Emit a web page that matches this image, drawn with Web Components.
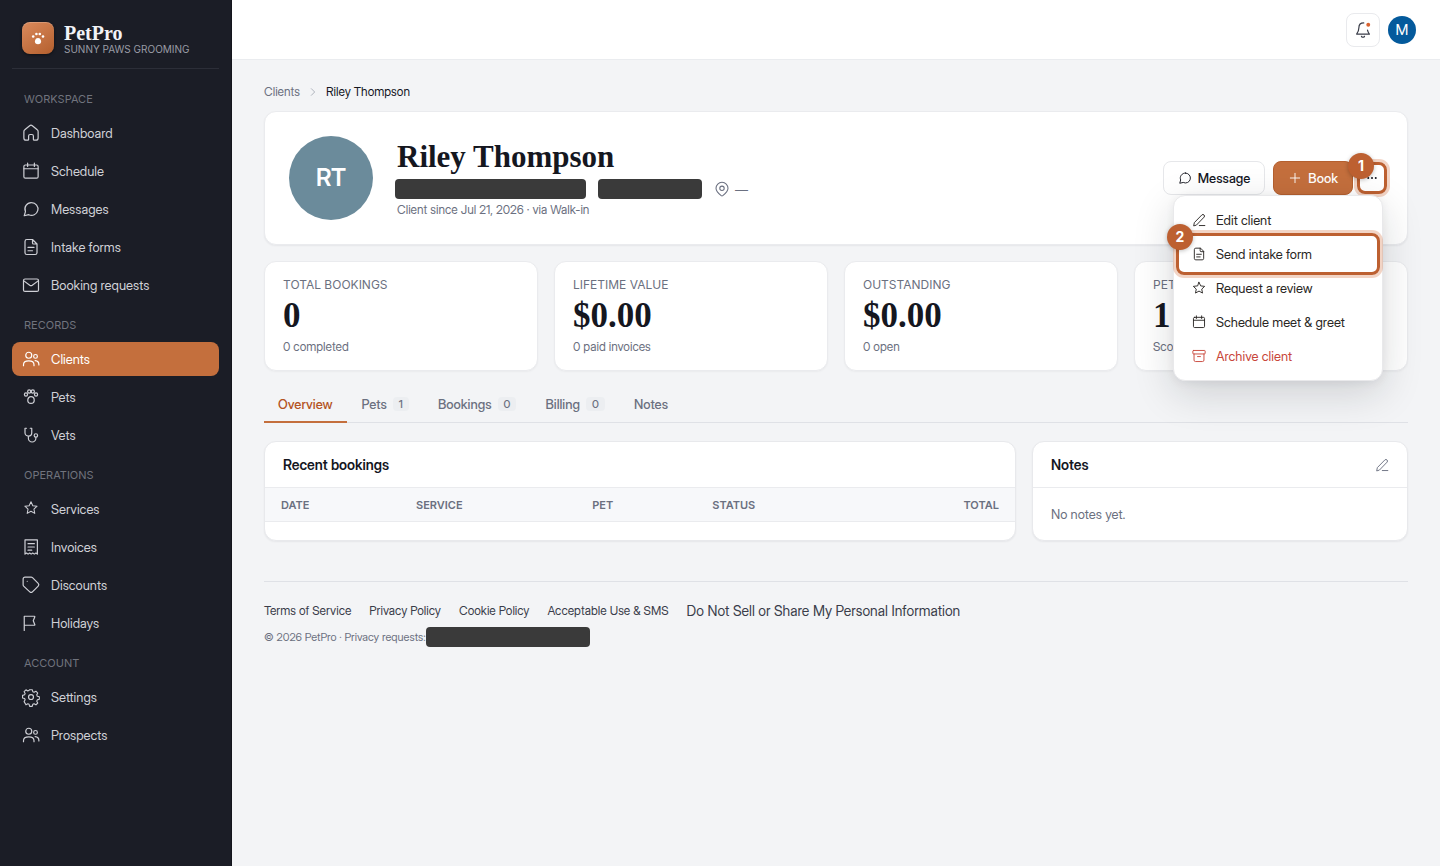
<!DOCTYPE html>
<html lang="en">
  <head>
    <meta charset="UTF-8" />
    <meta name="viewport" content="width=device-width, initial-scale=1.0" />
    <title>PetPro - Riley Thompson</title>
    <style>
      :root {
        --accent: #c46f3d;
        --accent-dark: #b45324;
        --ring: #bd6031;
        --ink: #15171f;
        --muted: #6b7080;
        --page: #f3f4f6;
        /* display cut for running text, text cut for small capitals */
        --sans: "Inter Display", Inter, "Liberation Sans", sans-serif;
        --caps: Inter, "Liberation Sans", sans-serif;
        --serif: "Liberation Serif", serif;
      }

      body {
        margin: 0;
        background: var(--page);
        color: var(--ink);
        font: 13px/20px var(--sans);
      }
    </style>
  </head>
  <body>
    <app-shell>
      <side-bar slot="side">
        <nav-group label="Workspace">
          <nav-item icon="home">Dashboard</nav-item>
          <nav-item icon="calendar">Schedule</nav-item>
          <nav-item icon="chat">Messages</nav-item>
          <nav-item icon="file">Intake forms</nav-item>
          <nav-item icon="mail">Booking requests</nav-item>
        </nav-group>
        <nav-group label="Records">
          <nav-item icon="users" active>Clients</nav-item>
          <nav-item icon="paw">Pets</nav-item>
          <nav-item icon="vet">Vets</nav-item>
        </nav-group>
        <nav-group label="Operations">
          <nav-item icon="spark">Services</nav-item>
          <nav-item icon="receipt">Invoices</nav-item>
          <nav-item icon="tag">Discounts</nav-item>
          <nav-item icon="flag">Holidays</nav-item>
        </nav-group>
        <nav-group label="Account">
          <nav-item icon="gear">Settings</nav-item>
          <nav-item icon="users">Prospects</nav-item>
        </nav-group>
      </side-bar>

      <top-bar slot="top"></top-bar>

      <bread-crumb current="Riley Thompson">Clients</bread-crumb>

      <client-header initials="RT" name="Riley Thompson">
        <span slot="since">Client since Jul 21, 2026 · via Walk-in</span>
        <client-actions slot="actions"></client-actions>
      </client-header>

      <stat-grid>
        <stat-card label="Total bookings" value="0">0 completed</stat-card>
        <stat-card label="Lifetime value" value="$0.00">0 paid invoices</stat-card>
        <stat-card label="Outstanding" value="$0.00">0 open</stat-card>
        <stat-card label="Pets" value="1">Scout</stat-card>
      </stat-grid>

      <tab-bar>
        <tab-item active>Overview</tab-item>
        <tab-item count="1">Pets</tab-item>
        <tab-item count="0">Bookings</tab-item>
        <tab-item count="0">Billing</tab-item>
        <tab-item>Notes</tab-item>
      </tab-bar>

      <panel-row>
        <panel-card heading="Recent bookings">
          <bookings-table></bookings-table>
        </panel-card>
        <panel-card heading="Notes">
          <icon-button slot="tool" icon="pencil" label="Edit notes"></icon-button>
          <empty-note>No notes yet.</empty-note>
        </panel-card>
      </panel-row>

      <page-footer></page-footer>
    </app-shell>

    <template id="app-shell">
      <style>
        :host {
          display: grid;
          grid-template-columns: 232px 1fr;
          min-height: 100vh;
        }
        main {
          padding: 22px 32px;
        }
      </style>
      <slot name="side"></slot>
      <div>
        <slot name="top"></slot>
        <main><slot></slot></main>
      </div>
    </template>

    <template id="side-bar">
      <style>
        :host {
          display: block;
          box-sizing: border-box;
          padding: 12px;
          background: #1b1d26;
          border-right: 1px solid #14151c;
        }
        header {
          display: flex;
          align-items: center;
          gap: 10px;
          padding: 10px 10px 14px;
          margin-bottom: 7px;
          border-bottom: 1px solid #2c2e38;
        }
        .logo {
          display: grid;
          place-items: center;
          width: 32px;
          height: 32px;
          border-radius: 8px;
          background: linear-gradient(145deg, #da8a5c, #b45f2e);
          box-shadow: 0 1px 3px rgba(0, 0, 0, 0.5), inset 0 1px 0 rgba(255, 255, 255, 0.2);
        }
        strong {
          display: block;
          font: bold 20px/22px var(--serif);
          color: #f2f3f7;
        }
        small {
          display: block;
          font: 10px/10px var(--caps);
          text-transform: uppercase;
          color: #9a9ca5;
          white-space: nowrap;
        }
      </style>
      <header>
        <span class="logo">
          <svg width="14" height="14" viewBox="0 0 14 14" fill="#fff">
            <circle cx="2.2" cy="5.5" r="1.3" />
            <circle cx="5.4" cy="3" r="1.3" />
            <circle cx="8.8" cy="3" r="1.3" />
            <circle cx="12" cy="5.5" r="1.3" />
            <path d="M7 7c1.900 0 3.100 1.700 3.100 3.500S9 13.200 7 13.200s-3.100-.9-3.100-2.700S5.100 7 7 7z" />
          </svg>
        </span>
        <div>
          <strong>PetPro</strong>
          <small>Sunny Paws Grooming</small>
        </div>
      </header>
      <nav aria-label="Main"><slot></slot></nav>
    </template>

    <template id="nav-group">
      <style>
        :host {
          display: block;
        }
        h2 {
          margin: 0;
          padding: 15px 12px 9px;
          font: 11px/16px var(--caps);
          text-transform: uppercase;
          color: #70737d;
        }
        div {
          display: grid;
          gap: 4px;
        }
      </style>
      <h2></h2>
      <div><slot></slot></div>
    </template>

    <template id="nav-item">
      <style>
        :host {
          display: block;
        }
        a {
          display: flex;
          align-items: center;
          gap: 11px;
          height: 34px;
          padding: 0 10px;
          border-radius: 8px;
          color: #cfd0d6;
          text-decoration: none;
        }
        :host([active]) a {
          background: var(--accent);
          color: #fff;
        }
      </style>
      <a href="#"><ui-icon size="18"></ui-icon><slot></slot></a>
    </template>

    <template id="top-bar">
      <style>
        :host {
          display: flex;
          justify-content: flex-end;
          align-items: center;
          gap: 8px;
          box-sizing: border-box;
          height: 60px;
          padding: 0 24px;
          background: #fff;
          border-bottom: 1px solid #eaecef;
        }
        button {
          display: grid;
          place-items: center;
          width: 34px;
          height: 34px;
          padding: 0;
          border: 1px solid #e9eaed;
          border-radius: 8px;
          background: #fff;
          color: #3a3d49;
        }
        .user {
          width: 28px;
          height: 28px;
          border: 0;
          border-radius: 50%;
          background: #045a9c;
          color: #fff;
          font: 15px/28px var(--sans);
        }
      </style>
      <button aria-label="Notifications"><ui-icon name="bell" size="18"></ui-icon></button>
      <button class="user">M</button>
    </template>

    <template id="bread-crumb">
      <style>
        :host {
          display: flex;
          align-items: center;
          gap: 8px;
          margin-bottom: 9px;
          font-size: 12px;
        }
        a {
          color: var(--muted);
          text-decoration: none;
        }
        ui-icon {
          color: #8d92a0;
        }
      </style>
      <a href="#"><slot></slot></a>
      <ui-icon name="chevron" size="10"></ui-icon>
      <span></span>
    </template>

    <template id="client-header">
      <style>
        :host {
          display: flex;
          align-items: center;
          gap: 24px;
          padding: 24px;
          margin-bottom: 16px;
          border: 1px solid #eaebee;
          border-radius: 12px;
          background: #fff;
          box-shadow: 0 1px 2px rgba(20, 22, 30, 0.06);
        }
        .avatar {
          display: grid;
          place-items: center;
          width: 84px;
          height: 84px;
          border-radius: 50%;
          background: #6b8b9b;
          color: #fff;
          font-size: 24px;
          font-weight: 600;
        }
        .info {
          flex: 1;
        }
        h1 {
          margin: 0;
          font: bold 31px/42px var(--serif);
        }
        .contact {
          display: flex;
          align-items: center;
          gap: 12px;
          margin: 1px 0 1px -2px;
          color: var(--muted);
        }
        .mask {
          height: 20px;
          border-radius: 4px;
          background: #3a3a3a;
        }
        .mail {
          width: 191px;
        }
        .phone {
          width: 104px;
        }
        .place {
          display: flex;
          align-items: center;
          gap: 5px;
        }
        .since {
          font-size: 12px;
          color: var(--muted);
        }
      </style>
      <div class="avatar"></div>
      <div class="info">
        <h1></h1>
        <div class="contact">
          <span class="mask mail"></span>
          <span class="mask phone"></span>
          <span class="place"><ui-icon name="pin" size="16"></ui-icon>—</span>
        </div>
        <div class="since"><slot name="since"></slot></div>
      </div>
      <slot name="actions"></slot>
    </template>

    <template id="client-actions">
      <style>
        :host {
          position: relative;
          display: flex;
          align-items: center;
          gap: 8px;
        }
        button {
          display: flex;
          align-items: center;
          gap: 6px;
          height: 34px;
          padding: 0 14px;
          border: 1px solid #e6e7ea;
          border-radius: 8px;
          background: #fff;
          color: var(--ink);
          font: 500 13px/20px var(--sans);
        }
        .primary {
          background: var(--accent);
          border-color: #b5602f;
          color: #fff;
        }
        .more {
          position: relative;
          justify-content: center;
          width: 22px;
          height: 24px;
          padding: 0;
          border: 0;
        }
        .menu {
          position: absolute;
          z-index: 1;
          top: 100%;
          right: 0;
          box-sizing: border-box;
          width: 210px;
          padding: 7px 6px;
          border: 1px solid #e9e9eb;
          border-radius: 12px;
          background: #fff;
          box-shadow: 0 12px 40px rgba(20, 22, 30, 0.16), 0 2px 8px rgba(20, 22, 30, 0.06);
        }
      </style>
      <button><ui-icon name="chat" size="14"></ui-icon>Message</button>
      <button class="primary"><ui-icon name="plus" size="14"></ui-icon>Book</button>
      <button class="more" aria-label="More actions">
        <ui-icon name="dots" size="12"></ui-icon>
        <step-mark number="1"></step-mark>
      </button>
      <div class="menu">
        <menu-entry icon="pencil">Edit client</menu-entry>
        <menu-entry icon="file" step="2">Send intake form</menu-entry>
        <menu-entry icon="star">Request a review</menu-entry>
        <menu-entry icon="calendar">Schedule meet &amp; greet</menu-entry>
        <menu-entry icon="archive" danger>Archive client</menu-entry>
      </div>
    </template>

    <template id="menu-entry">
      <style>
        :host {
          position: relative;
          display: block;
        }
        button {
          display: flex;
          align-items: center;
          gap: 10px;
          width: 100%;
          height: 34px;
          padding: 0 12px;
          border: 0;
          border-radius: 8px;
          background: none;
          color: #2a2725;
          font: 13px/20px var(--sans);
        }
        :host([danger]) button {
          color: #c8463a;
        }
      </style>
      <button><ui-icon size="14"></ui-icon><slot></slot></button>
    </template>

    <template id="step-mark">
      <style>
        :host {
          position: absolute;
          inset: -4px;
          border: 3px solid var(--ring);
          border-radius: 8px;
          box-shadow: 0 0 0 3px rgba(214, 120, 74, 0.32);
          pointer-events: none;
        }
        span {
          position: absolute;
          top: -12px;
          left: -12px;
          width: 26px;
          height: 26px;
          border-radius: 50%;
          background: var(--ring);
          box-shadow: 0 1px 4px rgba(0, 0, 0, 0.25);
          color: #fff;
          font: 700 14px/26px var(--caps);
          text-align: center;
        }
      </style>
      <span></span>
    </template>

    <template id="stat-grid">
      <style>
        :host {
          display: grid;
          grid-template-columns: repeat(4, 1fr);
          gap: 16px;
          margin-bottom: 16px;
        }
      </style>
      <slot></slot>
    </template>

    <template id="stat-card">
      <style>
        :host {
          display: block;
          padding: 13px 18px;
          border: 1px solid #eaebee;
          border-radius: 12px;
          background: #fff;
          box-shadow: 0 1px 2px rgba(20, 22, 30, 0.04);
          color: var(--muted);
          font-size: 12px;
        }
        .label {
          font-family: var(--caps);
          text-transform: uppercase;
        }
        .value {
          font: bold 35px/42px var(--serif);
          color: var(--ink);
        }
      </style>
      <div class="label"></div>
      <div class="value"></div>
      <slot></slot>
    </template>

    <template id="tab-bar">
      <style>
        :host {
          display: flex;
          gap: 1px;
          margin-bottom: 18px;
          border-bottom: 1px solid #dfe1e6;
        }
      </style>
      <slot></slot>
    </template>

    <template id="tab-item">
      <style>
        :host {
          display: block;
          margin-bottom: -1px;
        }
        a {
          display: flex;
          align-items: center;
          gap: 6px;
          height: 34px;
          padding: 0 14px;
          border-bottom: 2px solid transparent;
          color: var(--muted);
          font-weight: 500;
          text-decoration: none;
        }
        :host([active]) a {
          border-bottom-color: var(--accent);
          color: var(--accent-dark);
        }
        b {
          padding: 0 6px;
          border-radius: 4px;
          background: #eceef1;
          font-size: 11px;
          font-weight: 500;
          line-height: 14px;
        }
      </style>
      <a href="#"><slot></slot></a>
    </template>

    <template id="panel-row">
      <style>
        :host {
          display: grid;
          grid-template-columns: 2fr 1fr;
          gap: 16px;
          margin-bottom: 40px;
        }
      </style>
      <slot></slot>
    </template>

    <template id="panel-card">
      <style>
        :host {
          display: block;
          overflow: hidden;
          border: 1px solid #e8e9ec;
          border-radius: 12px;
          background: #fff;
          box-shadow: 0 1px 2px rgba(20, 22, 30, 0.06);
        }
        header {
          display: flex;
          align-items: center;
          justify-content: space-between;
          height: 45px;
          padding: 0 18px;
          border-bottom: 1px solid #eaebee;
        }
        h2 {
          margin: 0;
          font-size: 14px;
          font-weight: 600;
        }
      </style>
      <header>
        <h2></h2>
        <slot name="tool"></slot>
      </header>
      <slot></slot>
    </template>

    <template id="bookings-table">
      <style>
        :host {
          display: block;
          padding-bottom: 18px;
        }
        table {
          width: 100%;
          border-collapse: collapse;
        }
        th {
          height: 33px;
          padding: 0 16px;
          border-bottom: 1px solid #eaebee;
          background: #f7f8fa;
          color: var(--muted);
          font: 600 11px/16px var(--caps);
          text-align: left;
          text-transform: uppercase;
        }
        th:last-child {
          text-align: right;
        }
      </style>
      <table>
        <colgroup>
          <col style="width: 18%" />
          <col style="width: 23.5%" />
          <col style="width: 16%" />
          <col style="width: 21%" />
          <col />
        </colgroup>
        <thead>
          <tr>
            <th>Date</th>
            <th>Service</th>
            <th>Pet</th>
            <th>Status</th>
            <th>Total</th>
          </tr>
        </thead>
        <tbody></tbody>
      </table>
    </template>

    <template id="empty-note">
      <style>
        :host {
          display: block;
          padding: 16px 18px;
          color: var(--muted);
        }
      </style>
      <slot></slot>
    </template>

    <template id="icon-button">
      <style>
        :host {
          display: block;
        }
        button {
          display: block;
          padding: 0;
          border: 0;
          background: none;
          color: var(--muted);
        }
      </style>
      <button><ui-icon size="14"></ui-icon></button>
    </template>

    <template id="page-footer">
      <style>
        :host {
          display: block;
          padding-top: 19px;
          border-top: 1px solid #dfe1e6;
        }
        nav {
          display: flex;
          flex-wrap: wrap;
          gap: 18px;
          font-size: 12px;
        }
        a {
          color: #3a3d4a;
          text-decoration: none;
        }
        .privacy {
          font-size: 14px;
        }
        p {
          display: flex;
          align-items: center;
          margin: 6px 0 0;
          color: var(--muted);
          font-size: 11px;
        }
        .mask {
          width: 164px;
          height: 20px;
          border-radius: 4px;
          background: #3a3a3a;
        }
      </style>
      <nav aria-label="Legal">
        <a href="#">Terms of Service</a>
        <a href="#">Privacy Policy</a>
        <a href="#">Cookie Policy</a>
        <a href="#">Acceptable Use &amp; SMS</a>
        <a class="privacy" href="#">Do Not Sell or Share My Personal Information</a>
      </nav>
      <p>© 2026 PetPro · Privacy requests:<span class="mask"></span></p>
    </template>

    <script>
      const STAR = "M12 2.200l2.900 6.200 6.800.8-5 4.700 1.300 6.800-6-3.400-6 3.400 1.300-6.800-5-4.700 6.800-.8z";

      // 24 x 24 outline icons
      const ICONS = {
        home: '<path d="M2.500 10.200c0-1 .4-1.900 1.200-2.500l6.500-5.300a2.800 2.800 0 0 1 3.600 0l6.500 5.300c.8.600 1.200 1.500 1.200 2.500v8.300a3 3 0 0 1-3 3h-2.300a1 1 0 0 1-1-1V16a2 2 0 0 0-2-2h-2.400a2 2 0 0 0-2 2v4.500a1 1 0 0 1-1 1H5.500a3 3 0 0 1-3-3z"/>',
        calendar: '<rect x="2.500" y="4" width="19" height="17.500" rx="2"/><path d="M2.500 9h19M7.500 1.500V6M16.500 1.500V6"/>',
        chat: '<path d="M12.800 3.500a8.500 8.500 0 1 1-3.800 16.100L3 21l1.600-5.600A8.500 8.500 0 0 1 12.800 3.500z"/>',
        file: '<path d="M14 2H6.500a2.500 2.500 0 0 0-2.500 2.500v15A2.500 2.500 0 0 0 6.500 22h11a2.500 2.500 0 0 0 2.500-2.500V8zM14 2v4.500A1.500 1.500 0 0 0 15.500 8H20M8 12.500h8M8 17h6"/>',
        mail: '<rect x="2" y="4" width="20" height="16.500" rx="2"/><path d="M2.500 6.500l7.800 5.700a3 3 0 0 0 3.400 0l7.800-5.700"/>',
        users: '<circle cx="9" cy="7" r="4"/><circle cx="18" cy="8.500" r="2.500"/><path d="M2 21v-1.500C2 16.500 5 14.500 9 14.500s7 2 7 5V21M17.500 14.200c3 .3 5 2.300 5 5V20"/>',
        paw: '<circle cx="5.300" cy="8.600" r="2.100"/><circle cx="9.600" cy="4.600" r="2.100"/><circle cx="14.400" cy="4.600" r="2.100"/><circle cx="18.700" cy="8.600" r="2.100"/><path d="M12 11.500c2.800 0 4.300 2.400 4.300 4.800S14.800 20.500 12 20.500s-4.300-1.800-4.300-4.200 1.500-4.800 4.300-4.800z"/>',
        vet: '<path d="M6 3H4v6a4.500 4.500 0 0 0 9 0V3h-2M8.500 13.500v2.800a5 5 0 0 0 10 0V15"/><circle cx="18.500" cy="12.600" r="2.300"/>',
        star: `<path d="${STAR}"/>`,
        spark: `<g transform="translate(1.900 .5) scale(.84)"><path d="${STAR}"/></g>`,
        receipt: '<path d="M4 2.500h16.500v19l-2-1.500-2.100 1.500-2.100-1.500-2.100 1.500-2-1.500-2.100 1.500L6 20l-2 1.500zM8 7.500h8.500M8 12h8.500M8 16.200h5"/>',
        tag: '<path d="M1.500 4a2.500 2.500 0 0 1 2.500-2.500h8.200c.7 0 1.300.3 1.800.7l7.600 7.700a2.500 2.500 0 0 1 0 3.500l-7.700 7.700a2.500 2.500 0 0 1-3.500 0L2.200 13.500a2.500 2.500 0 0 1-.7-1.800z"/><path d="M7 7h.01"/>',
        flag: '<path d="M3 22V3h13.500a.6.600 0 0 1 .5 1L15 9l2 5a.6.600 0 0 1-.5 1H3"/>',
        gear: '<circle cx="12" cy="12" r="3.300"/><path d="M10.100 1.700h3.800l.8 3 1.900.8 2.700-1.600 2.700 2.700-1.500 2.700.8 1.900 3 .8v3.800l-3 .8-.8 1.900 1.500 2.700-2.700 2.700-2.700-1.600-1.900.8-.8 3h-3.800l-.8-3-1.900-.8-2.700 1.600L2 19.200l1.500-2.700-.8-1.900-3-.8V10l3-.8.8-1.900L2 4.600l2.700-2.700 2.700 1.600 1.900-.8z" transform="translate(1 .7) scale(.91)"/>',
        bell: '<path d="M13 2.500c-4 0-6.500 2.700-6.500 6.500 0 4-1.500 6.500-3 8.500h17c-1-1.300-2-3-2.500-5.300M10 20.500a2.300 2.300 0 0 0 4 0"/><circle cx="19" cy="5" r="2.600" fill="#d9622f" stroke="none"/>',
        chevron: '<path d="M8 4l8 8-8 8"/>',
        pin: '<path d="M12 2a9 9 0 0 1 9 9c0 5-4.500 8.500-7.800 11a2 2 0 0 1-2.400 0C7.500 19.500 3 16 3 11a9 9 0 0 1 9-9z"/><circle cx="12" cy="11" r="3.300"/>',
        plus: '<path d="M12 4v16M4 12h16"/>',
        dots: '<g fill="currentColor" stroke="none"><circle cx="4.500" cy="12" r="2"/><circle cx="12" cy="12" r="2"/><circle cx="19.500" cy="12" r="2"/></g>',
        pencil: '<path d="M3 21.500l1-5L17 3.200a2.700 2.700 0 0 1 3.800 3.800L8 20.300zM12.500 21.500H22"/>',
        archive: '<rect x="1.500" y="2.500" width="21" height="6" rx="1"/><path d="M3.500 8.500V19a2.500 2.500 0 0 0 2.500 2.500h12a2.500 2.500 0 0 0 2.500-2.500V8.500M9.500 13h5"/>',
      };

      // shadow root filled from the template with the same id
      class BaseElement extends HTMLElement {
        constructor() {
          super();
          this.attachShadow({ mode: "open" });
          const template = document.getElementById(this.localName);
          if (template) {
            this.shadowRoot.appendChild(template.content.cloneNode(true));
          }
        }

        $(selector) {
          return this.shadowRoot.querySelector(selector);
        }
      }

      class UiIcon extends BaseElement {
        static get observedAttributes() {
          return ["name", "size"];
        }

        attributeChangedCallback() {
          const size = this.getAttribute("size") || 18;
          this.shadowRoot.innerHTML = `
            <style>
              :host { display: block; flex: none; }
              svg { display: block; overflow: visible; }
            </style>
            <svg width="${size}" height="${size}" viewBox="0 0 24 24" fill="none" stroke="currentColor"
              stroke-width="1.6" stroke-linecap="round" stroke-linejoin="round" aria-hidden="true">
              ${ICONS[this.getAttribute("name")] || ""}
            </svg>`;
        }
      }

      class NavGroup extends BaseElement {
        connectedCallback() {
          this.$("h2").textContent = this.getAttribute("label");
        }
      }

      class NavItem extends BaseElement {
        connectedCallback() {
          this.$("ui-icon").setAttribute("name", this.getAttribute("icon"));
          if (this.hasAttribute("active")) {
            this.$("a").setAttribute("aria-current", "page");
          }
        }
      }

      class BreadCrumb extends BaseElement {
        connectedCallback() {
          this.$("span").textContent = this.getAttribute("current");
        }
      }

      class ClientHeader extends BaseElement {
        connectedCallback() {
          this.$(".avatar").textContent = this.getAttribute("initials");
          this.$("h1").textContent = this.getAttribute("name");
        }
      }

      class ClientActions extends BaseElement {
        connectedCallback() {
          const menu = this.$(".menu");
          this.$(".more").addEventListener("click", () => {
            menu.style.display = menu.style.display === "none" ? "" : "none";
          });
        }
      }

      class MenuEntry extends BaseElement {
        connectedCallback() {
          this.$("ui-icon").setAttribute("name", this.getAttribute("icon"));
          if (this.hasAttribute("step")) {
            const mark = document.createElement("step-mark");
            mark.setAttribute("number", this.getAttribute("step"));
            this.shadowRoot.appendChild(mark);
          }
        }
      }

      class StepMark extends BaseElement {
        connectedCallback() {
          this.$("span").textContent = this.getAttribute("number");
        }
      }

      class StatCard extends BaseElement {
        connectedCallback() {
          this.$(".label").textContent = this.getAttribute("label");
          this.$(".value").textContent = this.getAttribute("value");
        }
      }

      class TabItem extends BaseElement {
        connectedCallback() {
          if (this.hasAttribute("count")) {
            const count = document.createElement("b");
            count.textContent = this.getAttribute("count");
            this.$("a").appendChild(count);
          }
        }
      }

      class PanelCard extends BaseElement {
        connectedCallback() {
          this.$("h2").textContent = this.getAttribute("heading");
        }
      }

      class IconButton extends BaseElement {
        connectedCallback() {
          this.$("ui-icon").setAttribute("name", this.getAttribute("icon"));
          this.$("button").setAttribute("aria-label", this.getAttribute("label"));
        }
      }

      customElements.define("ui-icon", UiIcon);
      customElements.define("nav-group", NavGroup);
      customElements.define("nav-item", NavItem);
      customElements.define("bread-crumb", BreadCrumb);
      customElements.define("step-mark", StepMark);
      customElements.define("menu-entry", MenuEntry);
      customElements.define("client-actions", ClientActions);
      customElements.define("client-header", ClientHeader);
      customElements.define("stat-card", StatCard);
      customElements.define("tab-item", TabItem);
      customElements.define("icon-button", IconButton);
      customElements.define("panel-card", PanelCard);

      // plain layout elements, nothing but their template
      for (const name of [
        "app-shell",
        "side-bar",
        "top-bar",
        "stat-grid",
        "tab-bar",
        "panel-row",
        "bookings-table",
        "empty-note",
        "page-footer",
      ]) {
        customElements.define(name, class extends BaseElement {});
      }
    </script>
  </body>
</html>
